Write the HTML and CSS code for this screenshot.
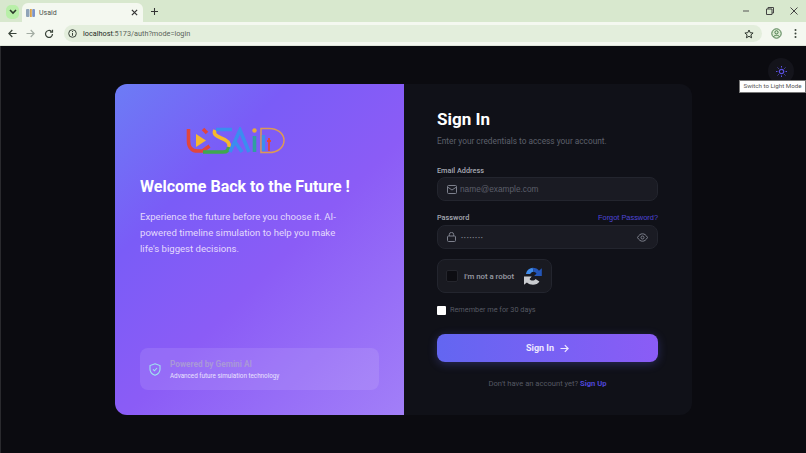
FILE: index.html
```html
<!DOCTYPE html>
<html lang="en">
<head>
    <meta charset="UTF-8">
    <meta name="viewport" content="width=device-width, initial-scale=1.0">
    <title>Usaid</title>
    <link rel="stylesheet" href="styles.css">
</head>
<body>

<!-- Browser chrome -->
<div class="tab-strip">
    <div class="tab-search">
        <svg width="8" height="6" viewBox="0 0 8 6"><path d="M1 1l3 3 3-3" fill="none" stroke="#2b3a2b" stroke-width="1.6"/></svg>
    </div>
    <div class="tab">
        <svg class="tab-icon" width="9" height="10" viewBox="0 0 9 10">
            <rect x="0" y="1" width="3.500" height="8" rx="1" fill="#8fa3b8"/>
            <rect x="4" y="1" width="1.800" height="8" fill="#d9a24b"/>
            <rect x="6.200" y="1" width="2.800" height="8" rx="1" fill="#7b93c9"/>
        </svg>
        <span class="tab-title">Usaid</span>
        <svg class="tab-close" width="7" height="7" viewBox="0 0 8 8"><path d="M1 1l6 6M7 1l-6 6" stroke="#333" stroke-width="1.400"/></svg>
    </div>
    <svg class="new-tab" width="7" height="7" viewBox="0 0 8 8"><path d="M4 0v8M0 4h8" stroke="#333" stroke-width="1.200"/></svg>
    <div class="window-buttons">
        <svg width="8" height="8" viewBox="0 0 8 8"><path d="M1 4h6" stroke="#555" stroke-width="1"/></svg>
        <svg width="8" height="8" viewBox="0 0 8 8"><path d="M.5 2h5.500v5.500h-5.500zM2 2V.5h5.500V6H6" fill="none" stroke="#444" stroke-width="1"/></svg>
        <svg width="8" height="8" viewBox="0 0 8 8"><path d="M.5.5l7 7M7.500.5l-7 7" stroke="#444" stroke-width="1"/></svg>
    </div>
</div>
<div class="toolbar">
    <svg width="9" height="9" viewBox="0 0 9 9"><path d="M8.500 4.500H1M4.300 1L.9 4.500 4.300 8" fill="none" stroke="#3a443a" stroke-width="1.200"/></svg>
    <svg width="9" height="9" viewBox="0 0 9 9"><path d="M.5 4.500H8M4.700 1l3.400 3.500L4.700 8" fill="none" stroke="#a3aca3" stroke-width="1.200"/></svg>
    <svg width="10" height="10" viewBox="0 0 10 10"><path d="M8.500 5A3.500 3.500 0 1 1 7.400 2.400M8.500.8v2.400H6.100" fill="none" stroke="#3a443a" stroke-width="1.200"/></svg>
    <div class="address-bar">
        <svg width="9" height="9" viewBox="0 0 9 9"><circle cx="4.500" cy="4.500" r="3.800" fill="none" stroke="#3a443a"/><path d="M4.500 4v2.800M4.500 2v1.100" stroke="#3a443a"/></svg>
        <span class="url"><span class="url-host">localhost</span>:5173/auth?mode=login</span>
        <svg class="star" width="10" height="10" viewBox="0 0 10 10"><path d="M5 1l1.200 2.700 2.900.3-2.200 1.900.7 2.900L5 7.300 2.400 8.800l.7-2.900L.9 4l2.900-.3z" fill="none" stroke="#2d352d" stroke-width="1"/></svg>
    </div>
    <svg width="11" height="11" viewBox="0 0 11 11"><circle cx="5.500" cy="5.500" r="4.700" fill="#dcebd3" stroke="#4a7a4a"/><circle cx="5.500" cy="4.300" r="1.600" fill="none" stroke="#4a7a4a"/><path d="M2.500 8.800c1-2 5-2 6 0" fill="none" stroke="#4a7a4a"/></svg>
    <svg class="menu-dots" width="3" height="9" viewBox="0 0 3 9"><circle cx="1.500" cy="1" r="1" fill="#3a443a"/><circle cx="1.500" cy="4.500" r="1" fill="#3a443a"/><circle cx="1.500" cy="8" r="1" fill="#3a443a"/></svg>
</div>

<!-- Page -->
<div class="page">
    <div class="theme-toggle">
        <svg width="11" height="11" viewBox="0 0 11 11">
            <circle cx="5.500" cy="5.500" r="2.200" fill="none" stroke="#5a50e0" stroke-width="1.200"/>
            <path d="M5.500 0v1.500M5.500 9.500V11M0 5.500h1.500M9.500 5.500H11M1.600 1.600l1 1M8.400 8.400l1 1M1.600 9.400l1-1M8.400 2.600l1-1" stroke="#5a50e0" stroke-width="1"/>
        </svg>
    </div>
    <div class="tooltip">Switch to Light Mode</div>

    <div class="auth-card">
        <div class="promo">
            <svg class="logo" width="100" height="28" viewBox="0 0 100 28" fill="none" stroke-width="3.600">
                <path d="M2.500 2v12c0 7 4 10 9 10h5l7-5" stroke="#e0463f"/>
                <path d="M10 7l10 6.500-10 6.500z" fill="#f5b82e" stroke="none"/>
                <path d="M17 2l4 4" stroke="#e0463f"/>
                <path d="M17 25h20c4 0 6-2 5-5" stroke="#3ea84e"/>
                <path d="M29 3c-2 4 1 6 6 8 6 2 9 5 8 9" stroke="#f5b82e"/>
                <path d="M30 2.500h16M44 25L54 3l9 22" stroke="#3b8df0"/>
                <path d="M49 15l7 10" stroke="#3b8df0"/>
                <circle cx="68.500" cy="3.500" r="2.200" fill="#e9a93a" stroke="none"/>
                <path d="M68.500 9v16" stroke="#2f9fa0"/>
                <path d="M75 1.500h8c8 0 15 4.500 15 12s-7 12-15 12h-8z" stroke="#dc9a55" stroke-width="1.500"/>
                <path d="M77.500 8v16" stroke="#3b8df0" stroke-width="3.400"/>
                <path d="M83 11v13M81 14h4" stroke="#e0463f" stroke-width="1.800"/>
            </svg>
            <h2 class="promo-title">Welcome Back to the Future !</h2>
            <p class="promo-text">Experience the future before you choose it. AI-powered timeline simulation to help you make life's biggest decisions.</p>
            <div class="promo-badge">
                <svg width="12" height="13" viewBox="0 0 12 13" fill="none" stroke="#9fe3ee" stroke-width="1.100">
                    <path d="M6 .8l5 1.800v3.700c0 3-2.200 5-5 6-2.800-1-5-3-5-6V2.600z"/>
                    <path d="M4 6.300l1.500 1.500L8 5"/>
                </svg>
                <div>
                    <div class="badge-title">Powered by Gemini AI</div>
                    <div class="badge-text">Advanced future simulation technology</div>
                </div>
            </div>
        </div>

        <div class="form-side">
            <h1 class="form-title">Sign In</h1>
            <p class="form-subtitle">Enter your credentials to access your account.</p>

            <form>
                <label class="field-label">Email Address</label>
                <div class="input-box">
                    <svg width="10" height="9" viewBox="0 0 10 9" fill="none" stroke="#7d808c"><rect x=".5" y=".5" width="9" height="8" rx="1"/><path d="M.5 2l4.500 3 4.500-3"/></svg>
                    <span class="input-text">name@example.com</span>
                </div>

                <div class="password-row">
                    <label class="field-label">Password</label>
                    <a class="forgot-link">Forgot Password?</a>
                </div>
                <div class="input-box">
                    <svg width="9" height="10" viewBox="0 0 9 10" fill="none" stroke="#7d808c"><rect x=".5" y="4" width="8" height="5.500" rx="1"/><path d="M2.300 4V2.600a2.200 2.200 0 0 1 4.400 0V4"/></svg>
                    <span class="input-dots">••••••••</span>
                    <svg class="eye" width="11" height="9" viewBox="0 0 11 9" fill="none" stroke="#7d808c"><path d="M.5 4.500C2 1.800 3.700.8 5.500.8s3.500 1 5 3.700c-1.500 2.700-3.200 3.700-5 3.700S2 7.200.5 4.500z"/><circle cx="5.500" cy="4.500" r="1.500"/></svg>
                </div>

                <div class="captcha">
                    <span class="captcha-box"></span>
                    <span class="captcha-label">I'm not a robot</span>
                    <svg width="20" height="20" viewBox="0 0 20 20" fill="none">
                        <path d="M2 8c.5-3.500 3-6 7-6.500l1 4c-2 .2-3 1-3.500 2.500z" fill="#3f8ae8"/>
                        <path d="M9 1.500c3 0 5.500 1.300 6.500 3L18.500 2v8h-8l2.500-2.500C12 6.200 11 5.600 10 5.500z" fill="#2456b8"/>
                        <path d="M0 10.500h8L5.800 13c1.200 2 4.700 2.200 6.200 0l4 2.700c-2.500 4-9 4.500-13 1L0 19z" fill="#c9cbcf"/>
                    </svg>
                </div>

                <label class="remember">
                    <span class="remember-box"></span>
                    Remember me for 30 days
                </label>

                <button type="button" class="submit-button">
                    Sign In
                    <svg width="9" height="9" viewBox="0 0 9 9" fill="none" stroke="#eee9ff" stroke-width="1.200"><path d="M.5 4.500h7.500M4.800 1.200l3.300 3.300-3.300 3.300"/></svg>
                </button>
            </form>

            <p class="signup-line">Don't have an account yet? <a class="signup-link">Sign Up</a></p>
        </div>
    </div>
</div>

</body>
</html>
```

FILE: styles.css
```css
* {
    box-sizing: border-box;
}

html, body {
    height: 100%;
}

body {
    margin: 0;
    font-family: Roboto, "Noto Sans", sans-serif;
    background-color: #0b0b10;
    overflow: hidden;
}

/* Browser chrome */
.tab-strip {
    display: flex;
    align-items: flex-end;
    height: 22px;
    padding-left: 6px;
    background-color: #d8e8ce;
}

.tab-search {
    display: flex;
    align-items: center;
    justify-content: center;
    width: 13px;
    height: 14px;
    margin-bottom: 3px;
    border-radius: 5px;
    background-color: #b8efa8;
}

.tab {
    display: flex;
    align-items: center;
    width: 121px;
    height: 19px;
    margin-left: 3px;
    padding: 0 5px 0 4px;
    border-radius: 6px 6px 0 0;
    background-color: #f4f8f0;
}

.tab-icon {
    margin-right: 4px;
}

.tab-title {
    flex: 1;
    font-size: 7px;
    color: #4a514a;
}

.new-tab {
    margin: 0 0 7px 8px;
}

.window-buttons {
    display: flex;
    gap: 16px;
    margin: 0 8px 7px auto;
}

.toolbar {
    display: flex;
    align-items: center;
    gap: 9px;
    height: 24px;
    padding: 0 9px 0 8px;
    background-color: #f4f8f0;
    border-bottom: 1px solid #dfe6da;
}

.address-bar {
    display: flex;
    align-items: center;
    flex: 1;
    height: 17px;
    margin-left: 1px;
    padding: 0 8px 0 4px;
    border-radius: 9px;
    background-color: #e3eedc;
}

.url {
    flex: 1;
    margin-left: 6px;
    font-size: 7.300px;
    color: #5b645b;
}

.url-host {
    color: #232923;
}

.menu-dots {
    margin-left: 3px;
}

/* Page */
.page {
    position: relative;
    display: flex;
    justify-content: center;
    height: 407px;
    padding: 38px 0 0;
    border-left: 1px solid #2a2a2e;
}

.theme-toggle {
    position: absolute;
    top: 12px;
    right: 12px;
    display: flex;
    align-items: center;
    justify-content: center;
    width: 26px;
    height: 26px;
    border-radius: 50%;
    background-color: #14141b;
}

.tooltip {
    position: absolute;
    top: 34px;
    right: 0;
    width: 67px;
    height: 13px;
    border: 1px solid #777;
    background-color: #fff;
    font-size: 6.200px;
    line-height: 11px;
    text-align: center;
    color: #555;
}

.auth-card {
    display: flex;
    width: 577px;
    height: 331px;
    border-radius: 12px;
    overflow: hidden;
    background-color: #101118;
}

.promo {
    display: flex;
    flex-direction: column;
    width: 289px;
    padding: 43px 25px 25px;
    color: #fff;
    background: linear-gradient(135deg, #6c7cf5 0%, #7a5cf7 28%, #8b5cf6 55%, #a27ff8 100%);
}

.logo {
    margin-left: 46px;
}

.promo-title {
    margin: 19px 0 0;
    font-size: 16px;
    line-height: 26px;
    font-weight: 700;
}

.promo-text {
    width: 200px;
    margin: 9px 0 0;
    font-size: 9.600px;
    line-height: 16px;
    color: #e3d9fd;
}

.promo-badge {
    display: flex;
    align-items: center;
    gap: 9px;
    height: 42px;
    margin-top: auto;
    padding: 0 9px;
    border-radius: 8px;
    background-color: rgba(255, 255, 255, 0.1);
}

.badge-title {
    font-size: 8.300px;
    line-height: 12px;
    font-weight: 700;
    color: #a998d8;
}

.badge-text {
    margin-top: 2px;
    font-size: 6.300px;
    line-height: 9px;
    color: #e9e2fd;
}

.form-side {
    flex: 1;
    padding: 23px 34px 0 33px;
}

.form-title {
    margin: 0;
    font-size: 17px;
    line-height: 24px;
    font-weight: 700;
    color: #fff;
}

.form-subtitle {
    margin: 3px 0 0;
    font-size: 8.300px;
    line-height: 14px;
    color: #5d606b;
}

form {
    margin-top: 17px;
}

.field-label {
    display: block;
    font-size: 7.300px;
    line-height: 11px;
    font-weight: 500;
    color: #a6a9b3;
}

.input-box {
    display: flex;
    align-items: center;
    height: 24px;
    margin-top: 1px;
    padding: 0 9px;
    border: 1px solid #23252e;
    border-radius: 8px;
    background-color: #1a1b23;
}

.input-text {
    margin-left: 3px;
    font-family: "Liberation Sans", sans-serif;
    font-size: 8.300px;
    color: #5c5f6a;
}

.input-dots {
    margin-left: 5px;
    font-size: 6px;
    letter-spacing: 0.800px;
    color: #8a8d98;
}

.eye {
    margin-left: auto;
}

.password-row {
    display: flex;
    justify-content: space-between;
    align-items: center;
    margin: 11px 0 2px;
}

.forgot-link {
    font-family: "Liberation Sans", sans-serif;
    font-size: 7.400px;
    color: #4f46d8;
}

.captcha {
    display: flex;
    align-items: center;
    width: 115px;
    height: 34px;
    margin-top: 10px;
    padding: 0 8px;
    border: 1px solid #23252e;
    border-radius: 8px;
    background-color: #191a21;
}

.captcha-box {
    flex: none;
    width: 12px;
    height: 12px;
    margin-right: 6px;
    border-radius: 2px;
    background-color: #0d0d12;
    border: 1px solid #24252c;
}

.captcha-label {
    width: 62px;
    font-size: 7.800px;
    font-weight: 500;
    white-space: nowrap;
    color: #9a9ca5;
}

.remember {
    display: flex;
    align-items: center;
    gap: 4px;
    margin-top: 11px;
    font-size: 7.300px;
    line-height: 12px;
    color: #565963;
}

.remember-box {
    width: 9px;
    height: 9px;
    border-radius: 1px;
    background-color: #fff;
}

.submit-button {
    display: flex;
    align-items: center;
    justify-content: center;
    gap: 6px;
    width: 100%;
    height: 28px;
    margin-top: 18px;
    border: none;
    border-radius: 8px;
    font-family: inherit;
    font-size: 9px;
    font-weight: 700;
    color: #eee9ff;
    background: linear-gradient(90deg, #6366f1, #8b5cf6);
    box-shadow: 0 2px 10px rgba(99, 102, 241, 0.3);
}

.signup-line {
    margin: 16px 0 0;
    font-size: 7.600px;
    line-height: 12px;
    text-align: center;
    color: #565963;
}

.signup-link {
    font-weight: 700;
    color: #4f46d8;
}
```
